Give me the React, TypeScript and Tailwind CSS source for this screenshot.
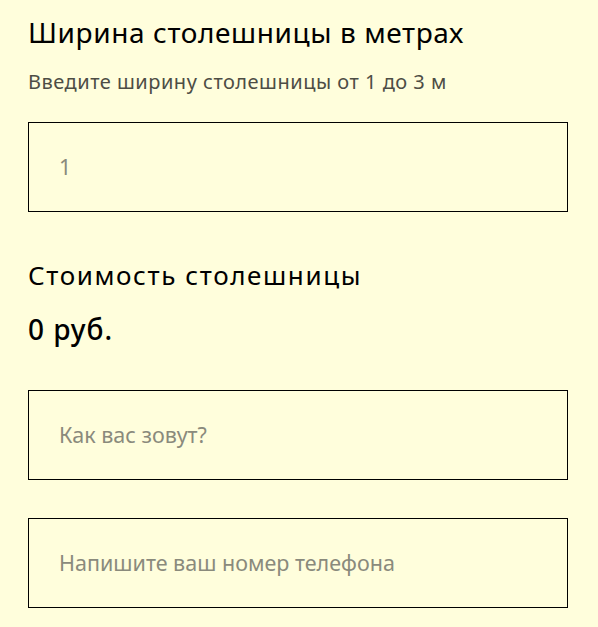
import React from "react";

export default function App() {
  const font = { fontFamily: '"Noto Sans", Roboto, sans-serif' };
  return (
    <div className="min-h-[627px] w-[598px] bg-[#fffedc] px-[28px] pt-[14px] text-black" style={font}>
      <h2 className="text-[28px] leading-[36px] font-normal tracking-[0.6px] text-black">Ширина столешницы в метрах</h2>
      <p className="mt-[19px] text-[20px] leading-[26px] tracking-[0.5px] text-[#4d4d45]">Введите ширину столешницы от 1 до 3 м</p>
      <div className="mt-[27px] flex h-[90px] w-[540px] items-center border border-black px-[30px]">
        <span className="text-[21.5px] text-[#8a8a7c]">1</span>
      </div>
      <h3 className="mt-[46px] text-[26px] leading-[34px] font-normal tracking-[1.6px]">Стоимость столешницы</h3>
      <div className="mt-[20px] text-[28px] leading-[34px] font-medium tracking-[1px]">0 руб.</div>
      <div className="mt-[44px] flex h-[90px] w-[540px] items-center border border-black px-[30px]">
        <span className="text-[21.5px] text-[#8a8a7c]">Как вас зовут?</span>
      </div>
      <div className="mt-[38px] flex h-[90px] w-[540px] items-center border border-black px-[30px]">
        <span className="text-[21.5px] text-[#8a8a7c]">Напишите ваш номер телефона</span>
      </div>
    </div>
  );
}
